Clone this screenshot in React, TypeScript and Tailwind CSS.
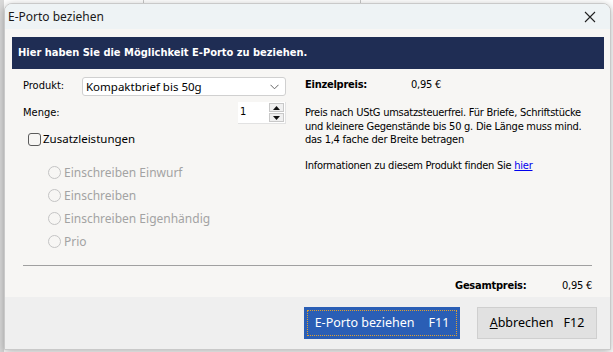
import React from "react";

const tah = { fontFamily: '"DejaVu Sans Condensed", "DejaVu Sans", sans-serif' };
const seg = { fontFamily: '"Noto Sans", "Open Sans", sans-serif' };

function Radio({ label }: { label: string }) {
  return (
    <div className="flex items-center h-[23px]">
      <span className="w-[13px] h-[13px] rounded-full border border-[#c4c4c4] bg-[#f7f6f4]" />
      <span className="ml-[3px] text-[12px] text-[#a3a3a3]" style={seg}>{label}</span>
    </div>
  );
}

export default function App() {
  return (
    <div className="relative w-[613px] h-[352px] bg-[#f3f3f3] overflow-hidden">
      {/* background app grid */}
      <div className="absolute inset-0 bg-white" />
      <div className="absolute left-0 top-0 w-[4px] h-full bg-[#d9d9d9]" />
      <div className="absolute left-[143px] top-0 w-px h-[4px] bg-[#c8c8c8]" />
      <div className="absolute left-[360px] top-0 w-px h-[4px] bg-[#c8c8c8]" />
      {/* dialog window */}
      <div className="absolute left-[4px] top-[3px] w-[607px] h-[347px] rounded-t-[8px] bg-[#f7f6f4] flex flex-col overflow-hidden border border-[#c9c9c9] shadow-[0_2px_8px_rgba(0,0,0,0.3)]">
        {/* title bar */}
        <div className="h-[25px] bg-[#eef3f5] flex items-center justify-between pl-[3px] pr-[14px] shrink-0">
          <span className="text-[12px] text-[#1a1a1a] leading-none" style={seg}>E-Porto beziehen</span>
          <svg width="12" height="12" viewBox="0 0 12 12" className="mt-[1px]">
            <path d="M1 1 L11 11 M11 1 L1 11" stroke="#222" strokeWidth="1.1" />
          </svg>
        </div>
        {/* body */}
        <div className="flex-1 flex flex-col px-[7px] pt-[8px]">
          <div className="h-[32px] bg-[#1f2d54] flex items-center pl-[6px] mr-[-1px]">
            <span className="text-white text-[11px] font-bold" style={tah}>
              Hier haben Sie die Möglichkeit E-Porto zu beziehen.
            </span>
          </div>
          <div className="flex mt-[8px]">
            {/* left column */}
            <div className="w-[274px] pl-[11px] flex flex-col">
              <div className="flex items-center h-[19px]">
                <span className="w-[59px] text-[11px] text-black" style={tah}>Produkt:</span>
                <div className="w-[204px] h-[19px] bg-white border border-[#d0d0d0] rounded-[3px] flex items-center justify-between pl-[3px] pr-[6px]">
                  <span className="text-[11.5px] text-black leading-none" style={seg}>Kompaktbrief bis 50g</span>
                  <svg width="9" height="6" viewBox="0 0 9 6">
                    <path d="M0.5 0.8 L4.5 4.8 L8.5 0.8" stroke="#666" strokeWidth="1" fill="none" />
                  </svg>
                </div>
              </div>
              <div className="flex items-center justify-between h-[22px] mt-[6px]">
                <span className="text-[11px] text-black" style={tah}>Menge:</span>
                <div className="w-[48px] h-[22px] bg-white border-b border-r border-[#e2e2e2] flex items-center justify-between pl-[2px] pr-[1px]">
                  <span className="text-[11px] text-black" style={tah}>1</span>
                  <div className="flex flex-col w-[15px] h-[19px] gap-[1px]">
                    <div className="flex-1 border border-[#c8c8c8] bg-[#f0f0f0] flex items-center justify-center">
                      <svg width="7" height="4" viewBox="0 0 7 4"><path d="M0 4 L3.5 0 L7 4 Z" fill="#111" /></svg>
                    </div>
                    <div className="flex-1 border border-[#c8c8c8] bg-[#f0f0f0] flex items-center justify-center">
                      <svg width="7" height="4" viewBox="0 0 7 4"><path d="M0 0 L3.5 4 L7 0 Z" fill="#111" /></svg>
                    </div>
                  </div>
                </div>
              </div>
              <div className="flex items-center h-[14px] mt-[8px] pl-[5px]">
                <span className="w-[13px] h-[13px] rounded-[3px] border border-[#5b5b5b] bg-[#f7f6f4]" />
                <span className="ml-[2px] text-[11.5px] text-black" style={seg}>Zusatzleistungen</span>
              </div>
              <div className="flex flex-col pl-[25px] mt-[15px]">
                <Radio label="Einschreiben Einwurf" />
                <Radio label="Einschreiben" />
                <Radio label="Einschreiben Eigenhändig" />
                <Radio label="Prio" />
              </div>
            </div>
            {/* right column */}
            <div className="flex-1 pl-[19px] flex flex-col tracking-[-0.25px]">
              <div className="flex items-center h-[16px]">
                <span className="w-[106px] text-[11px] font-bold text-black" style={tah}>Einzelpreis:</span>
                <span className="text-[11px] text-black" style={tah}>0,95 €</span>
              </div>
              <p className="mt-[13px] text-[11px] leading-[13.5px] text-black whitespace-nowrap" style={tah}>
                Preis nach UStG umsatzsteuerfrei. Für Briefe, Schriftstücke
                <br />
                und kleinere Gegenstände bis 50 g. Die Länge muss mind.
                <br />
                das 1,4 fache der Breite betragen
              </p>
              <p className="mt-[11px] text-[11px] text-black" style={tah}>
                Informationen zu diesem Produkt finden Sie{" "}
                <span className="text-[#0000ee] underline">hier</span>
              </p>
            </div>
          </div>
          <div className="flex-1" />
          <div className="mx-[11px] h-px bg-[#a0a0a0]" />
          <div className="flex justify-end items-start h-[31px] pt-[13px] pr-[11px] tracking-[-0.25px]">
            <span className="w-[107px] text-[11px] leading-[13px] font-bold text-black" style={tah}>Gesamtpreis:</span>
            <span className="text-[11px] leading-[13px] text-black" style={tah}>0,95 €</span>
          </div>
        </div>
        {/* footer */}
        <div className="h-[52px] bg-[#efefef] flex items-start justify-end pt-[10px] pr-[13px] gap-[17px] shrink-0">
          <div className="w-[156px] h-[32px] bg-[#2a5eb5] p-[3px]">
            <div className="w-full h-full border border-dotted border-[#e0a030] flex items-center justify-center gap-[14px]">
              <span className="text-white text-[12.5px]" style={seg}>E-Porto beziehen</span>
              <span className="text-white text-[12.5px]" style={seg}>F11</span>
            </div>
          </div>
          <div className="w-[120px] h-[32px] bg-[#e1e1e1] border border-[#cfcfcf] flex items-center justify-center gap-[10px]">
            <span className="text-black text-[12.5px]" style={seg}><span className="underline">A</span>bbrechen</span>
            <span className="text-black text-[12.5px]" style={seg}>F12</span>
          </div>
        </div>
      </div>
    </div>
  );
}
